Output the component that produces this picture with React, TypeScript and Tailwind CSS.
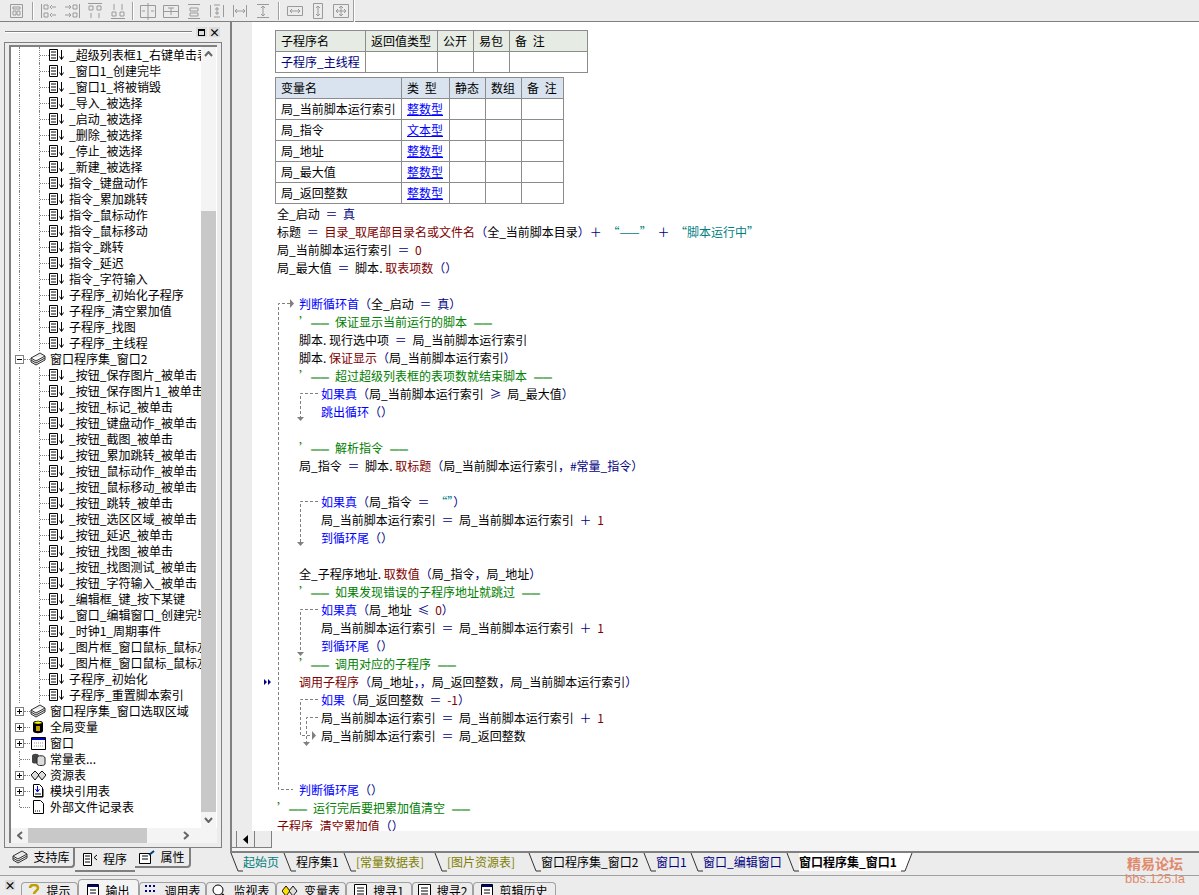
const FONT = "font-['Noto_Sans_CJK_SC','Liberation_Sans',sans-serif]";

type Part = [string, string];

const K = "text-[#0000ff]";
const N = "text-[#000080]";
const M = "text-[#800000]";
const T = "text-[#008080]";
const B = "text-black";
const DOT: Part = [".", "inline-block w-[6px] text-black"];

type Row = { x: number; parts: Part[] };

const idx = "局_当前脚本运行索引";

// comment line: quote, thick rule, text, thick rule
const note = (text: string): Part[] => [
  ["’", "inline-block w-[12px] text-[#008000]"],
  ["══", "mr-[6px] text-[9px] font-bold text-[#008000]"],
  [text, "text-[#008000]"],
  ["══", "ml-[7px] text-[9px] font-bold text-[#008000]"],
];

const codeRows: Row[] = [
  { x: 0, parts: [["全_启动", B], [" ＝ ", N], ["真", N]] },
  { x: 0, parts: [["标题", B], [" ＝ ", N], ["目录_取尾部目录名或文件名", M], ["（", N], ["全_当前脚本目录", B], ["）＋ ", N], ["“——”", T], [" ＋ ", N], ["“脚本运行中”", T]] },
  { x: 0, parts: [[idx, B], [" ＝ ", N], ["0", M]] },
  { x: 0, parts: [["局_最大值", B], [" ＝ ", N], ["脚本", B], DOT, ["取表项数", M], ["（）", N]] },
  { x: 0, parts: [] },
  { x: 22, parts: [["判断循环首", K], ["（", N], ["全_启动", B], [" ＝ ", N], ["真", N], ["）", N]] },
  { x: 22, parts: note("保证显示当前运行的脚本") },
  { x: 22, parts: [["脚本", B], DOT, ["现行选中项", B], [" ＝ ", N], [idx, B]] },
  { x: 22, parts: [["脚本", B], DOT, ["保证显示", M], ["（", N], [idx, B], ["）", N]] },
  { x: 22, parts: note("超过超级列表框的表项数就结束脚本") },
  { x: 44, parts: [["如果真", K], ["（", N], [idx, B], [" ≥ ", N], ["局_最大值", B], ["）", N]] },
  { x: 44, parts: [["跳出循环", K], ["（）", N]] },
  { x: 0, parts: [] },
  { x: 22, parts: note("解析指令") },
  { x: 22, parts: [["局_指令", B], [" ＝ ", N], ["脚本", B], DOT, ["取标题", M], ["（", N], [idx, B], ["，", N], ["#常量_指令", N], ["）", N]] },
  { x: 0, parts: [] },
  { x: 44, parts: [["如果真", K], ["（", N], ["局_指令", B], [" ＝ ", N], ["“”", T], ["）", N]] },
  { x: 44, parts: [[idx, B], [" ＝ ", N], [idx, B], [" ＋ ", N], ["1", M]] },
  { x: 44, parts: [["到循环尾", K], ["（）", N]] },
  { x: 0, parts: [] },
  { x: 22, parts: [["全_子程序地址", B], DOT, ["取数值", M], ["（", N], ["局_指令", B], ["，", N], ["局_地址", B], ["）", N]] },
  { x: 22, parts: note("如果发现错误的子程序地址就跳过") },
  { x: 44, parts: [["如果真", K], ["（", N], ["局_地址", B], [" ≤ ", N], ["0", M], ["）", N]] },
  { x: 44, parts: [[idx, B], [" ＝ ", N], [idx, B], [" ＋ ", N], ["1", M]] },
  { x: 44, parts: [["到循环尾", K], ["（）", N]] },
  { x: 22, parts: note("调用对应的子程序") },
  { x: 22, parts: [["调用子程序", M], ["（", N], ["局_地址", B], ["，，", N], ["局_返回整数", B], ["，", N], [idx, B], ["）", N]] },
  { x: 44, parts: [["如果", K], ["（", N], ["局_返回整数", B], [" ＝ ", N], ["-1", M], ["）", N]] },
  { x: 44, parts: [[idx, B], [" ＝ ", N], [idx, B], [" ＋ ", N], ["1", M]] },
  { x: 44, parts: [[idx, B], [" ＝ ", N], ["局_返回整数", B]] },
  { x: 0, parts: [] },
  { x: 0, parts: [] },
  { x: 22, parts: [["判断循环尾", K], ["（）", N]] },
  { x: 0, parts: note("运行完后要把累加值清空") },
  { x: 0, parts: [["子程序_清空累加值", M], ["（）", N]] },
];

const subs1 = [
  "_超级列表框1_右键单击表", "_窗口1_创建完毕", "_窗口1_将被销毁", "_导入_被选择", "_启动_被选择", "_删除_被选择",
  "_停止_被选择", "_新建_被选择", "指令_键盘动作", "指令_累加跳转", "指令_鼠标动作", "指令_鼠标移动", "指令_跳转",
  "指令_延迟", "指令_字符输入", "子程序_初始化子程序", "子程序_清空累加值", "子程序_找图", "子程序_主线程",
];
const subs2 = [
  "_按钮_保存图片_被单击", "_按钮_保存图片1_被单击", "_按钮_标记_被单击", "_按钮_键盘动作_被单击", "_按钮_截图_被单击",
  "_按钮_累加跳转_被单击", "_按钮_鼠标动作_被单击", "_按钮_鼠标移动_被单击", "_按钮_跳转_被单击", "_按钮_选区区域_被单击",
  "_按钮_延迟_被单击", "_按钮_找图_被单击", "_按钮_找图测试_被单击", "_按钮_字符输入_被单击", "_编辑框_键_按下某键",
  "_窗口_编辑窗口_创建完毕", "_时钟1_周期事件", "_图片框_窗口鼠标_鼠标左键", "_图片框_窗口鼠标_鼠标左键", "子程序_初始化", "子程序_重置脚本索引",
];

function SubIcon() {
  return (
    <svg width="16" height="12" viewBox="0 0 16 12" className="shrink-0">
      <path d="M.5.5h8v11h-8zM2 3h5M2 6h5M2 9h5" fill="#fff" stroke="#000" />
      <path d="M12.500 1v9M10.500 7.500l2 3 2-3" fill="none" stroke="#000" />
    </svg>
  );
}

function StackIcon() {
  return (
    <svg width="16" height="14" viewBox="0 0 16 14" className="shrink-0">
      <path d="M1 6l9-5 5 3-9 5zM1 6v2l5 3 9-5V4M1 8v2l5 3 9-5V6" fill="#e8e8e8" stroke="#333" />
    </svg>
  );
}

function Expander({ open }: { open?: boolean }) {
  return (
    <span className="relative z-10 flex h-[9px] w-[9px] shrink-0 items-center justify-center border border-[#808080] bg-white">
      <span className="block h-px w-[5px] bg-black" />
      {!open && <span className="absolute h-[5px] w-px bg-black" />}
    </span>
  );
}

function Guide({ half }: { half?: boolean }) {
  return <span className={`w-px shrink-0 border-l border-dotted border-[#808080] ${half ? "h-[8px] self-start" : "self-stretch"}`} />;
}

function Dots({ w }: { w: string }) {
  return <span className={`shrink-0 border-t border-dotted border-[#808080] ${w}`} />;
}

function SubRow({ label }: { label: string }) {
  return (
    <div className="flex h-4 items-center pl-[8px]">
      <Guide />
      <span className="ml-[19px] flex self-stretch">
        <Guide />
      </span>
      <Dots w="w-[9px]" />
      <SubIcon />
      <span className="ml-[4px] whitespace-nowrap">{label}</span>
    </div>
  );
}

function GroupRow({ label, open, icon, noBox, last }: { label: string; open?: boolean; icon: React.ReactNode; noBox?: boolean; last?: boolean }) {
  return (
    <div className="flex h-4 items-center pl-[4px]">
      {noBox ? (
        <>
          <span className="ml-[4px] flex self-stretch">
            <Guide half={last} />
          </span>
          <Dots w="w-[10px]" />
        </>
      ) : (
        <>
          <Expander open={open} />
          <Dots w="w-[6px]" />
        </>
      )}
      <span className="flex w-[16px] shrink-0 justify-center">{icon}</span>
      <span className="ml-[4px] whitespace-nowrap">{label}</span>
    </div>
  );
}

function Tree() {
  return (
    <div className="flex flex-col text-[12px] leading-4 text-black">
      {subs1.map((s) => (
        <SubRow key={s} label={s} />
      ))}
      <GroupRow label="窗口程序集_窗口2" open icon={<StackIcon />} />
      {subs2.map((s, i) => (
        <SubRow key={s + i} label={s} />
      ))}
      <GroupRow label="窗口程序集_窗口选取区域" icon={<StackIcon />} />
      <GroupRow
        label="全局变量"
        icon={
          <svg width="12" height="14" viewBox="0 0 12 14">
            <path d="M1 3c0-3 10-3 10 0v8c0 3-10 3-10 0z" fill="#000" />
            <path d="M2 3c2-2 6-2 8 0-2 1-6 1-8 0z" fill="#ffff00" />
            <path d="M4 6h4v5H4z" fill="#c0a000" />
          </svg>
        }
      />
      <GroupRow
        label="窗口"
        icon={
          <svg width="15" height="13" viewBox="0 0 15 13">
            <path d="M.5.5h14v12H.5z" fill="#fff" stroke="#000" />
            <path d="M1 1h13v2H1z" fill="#0000c0" />
            <path d="M3 6h9M3 9h9" stroke="#999" strokeDasharray="1 1" />
          </svg>
        }
      />
      <GroupRow
        label="常量表..."
        noBox
        icon={
          <svg width="15" height="13" viewBox="0 0 15 13">
            <path d="M1 3c0-3 7-3 7 0v6c0 2-7 2-7 0z" fill="#444" />
            <path d="M6 5c0-3 8-3 8 0v6c0 2-8 2-8 0z" fill="#ddd" stroke="#222" />
          </svg>
        }
      />
      <GroupRow
        label="资源表"
        icon={
          <svg width="15" height="11" viewBox="0 0 15 11">
            <path d="M4 1l4 4-4 5-4-5zM11 1l4 4-4 5-4-5z" fill="#ddd" stroke="#111" />
          </svg>
        }
      />
      <GroupRow
        label="模块引用表"
        icon={
          <svg width="14" height="14" viewBox="0 0 14 14">
            <path d="M2.500.5h6l3 3v9h-9z" fill="#fff" stroke="#000" />
            <path d="M12 5v8H4" fill="none" stroke="#000" />
            <path d="M6.500 2v5M4.500 5l2 3 2-3" fill="none" stroke="#0000d0" />
            <path d="M4 10h6" stroke="#000" />
          </svg>
        }
      />
      <GroupRow
        label="外部文件记录表"
        noBox
        last
        icon={
          <svg width="13" height="14" viewBox="0 0 13 14">
            <path d="M1.500.5h7l3 3v10h-10z" fill="#fff" stroke="#000" />
            <path d="M3 11h1M5 11h1M7 11h1" stroke="#000" />
          </svg>
        }
      />
    </div>
  );
}

function ToolIcon({ d }: { d: string }) {
  return (
    <svg width="18" height="18" viewBox="0 0 18 18" className="shrink-0">
      <path d={d} fill="none" stroke="#9a9a9a" />
    </svg>
  );
}

const ic = {
  form: "M2.500 2.500h12v13h-12zM5 5h7v2H5zM5 9h3v4H5zM9 9h3v4H9z",
  a: "M1.500 2v14M4 3h4v4H4zM4 11h4v4H4zM12 5h4M12 13h4M12 3l-2 2 2 2M12 11l-2 2 2 2",
  b: "M16.500 2v14M10 3h4v4h-4zM10 11h4v4h-4zM2 5h5M2 13h5M6 3l2 2-2 2M6 11l2 2-2 2",
  c: "M2 1.500h14M3 4h4v4H3zM11 4h4v4h-4zM5 11v5M13 11v5",
  d: "M2 16.500h14M3 10h4v4H3zM11 10h4v4h-4zM5 2v6M13 2v6",
  e: "M1.500 3.500h15v12h-15zM9 1v17M3 9h3M12 9h3",
  f: "M1.500 3.500h15v12h-15zM1 9.500h16M9 6v7M6 6h6",
  g: "M3 2.500h12M3 16.500h12M5 6h8v3H5zM5 11h8v3H5z",
  h: "M2.500 3v12M15.500 3v12M6 3h6M6 15h6M9 5v8M7 7h4M7 11h4",
  i: "M2.500 3v12M15.500 3v12M4 9h10M4 9l2-2M4 9l2 2M14 9l-2-2M14 9l-2 2",
  j: "M3 2.500h12M3 15.500h12M9 4v10M9 4L7 6M9 4l2 2M9 14l-2-2M9 14l2-2",
  k: "M1.500 4.500h15v9h-15zM4 9h10M4 9l2-2M4 9l2 2M14 9l-2-2M14 9l-2 2",
  l: "M4.500 1.500h9v15h-9zM9 4v10M9 4L7 6M9 4l2 2M9 14l-2-2M9 14l2-2",
  m: "M1.500 2.500h15v13h-15zM9 4v10M4 9h10M9 4L7 6M9 4l2 2M9 14l-2-2M9 14l2-2M4 9l2-2M4 9l2 2M14 9l-2-2M14 9l-2 2",
};

function Sep({ wide }: { wide?: boolean }) {
  return <span className={`h-[18px] w-[2px] shrink-0 border-l border-r border-l-[#a0a0a0] border-r-white ${wide ? "mx-[6px]" : "mx-[5px]"}`} />;
}

function Toolbar() {
  return (
    <div className="flex h-[22px] shrink-0 items-center border-b border-[#808080] bg-[#ececec] pl-[8px]">
      <ToolIcon d={ic.form} />
      <Sep wide />
      <div className="flex gap-[5px]">
        <ToolIcon d={ic.a} />
        <ToolIcon d={ic.b} />
        <ToolIcon d={ic.c} />
        <ToolIcon d={ic.d} />
      </div>
      <Sep />
      <div className="flex gap-[5px]">
        <ToolIcon d={ic.e} />
        <ToolIcon d={ic.f} />
        <ToolIcon d={ic.g} />
        <ToolIcon d={ic.h} />
        <ToolIcon d={ic.i} />
        <ToolIcon d={ic.j} />
      </div>
      <Sep wide />
      <div className="flex gap-[5px]">
        <ToolIcon d={ic.k} />
        <ToolIcon d={ic.l} />
        <ToolIcon d={ic.m} />
      </div>
      <span className="ml-[3px] h-[22px] w-[2px] border-l border-r border-l-[#a0a0a0] border-r-white" />
    </div>
  );
}

function LeftPanel() {
  return (
    <div className="flex w-[222px] shrink-0 flex-col pl-[4px]">
      <div className="flex h-[20px] shrink-0 items-center pl-[1px] pr-[2px]">
        <span className="h-[2px] flex-1 border-t border-b border-t-[#808080] border-b-white" />
        <span className="ml-[4px] flex h-[10px] w-[11px] items-center justify-center bg-[#dcdcdc]">
          <span className="block h-[7px] w-[7px] border border-t-2 border-black" />
        </span>
        <span className="ml-[2px] flex h-[10px] w-[11px] items-center justify-center bg-[#dcdcdc] text-[11px] font-bold leading-none">×</span>
      </div>
      <div className="flex h-[806px] flex-col border border-[#808080] bg-[#ececec] px-[4px] pb-[4px] pt-[2px]">
        <div className="flex h-full flex-col border-2 border-[#808080] border-b-0 border-r-0 bg-white">
          <div className="flex min-h-0 flex-1">
            <div className="w-[190px] overflow-hidden">
              <Tree />
            </div>
            <div className="flex w-[15px] shrink-0 flex-col bg-[#f4f4f4]">
              <span className="flex h-[14px] items-center justify-center">
                <svg width="9" height="6" viewBox="0 0 9 6">
                  <path d="M1 5l3.500-4L8 5" fill="none" stroke="#666" strokeWidth="2" />
                </svg>
              </span>
              <span className="mt-[150px] flex-1 bg-[#c8c8c8]" />
              <span className="flex h-[16px] items-center justify-center">
                <svg width="9" height="6" viewBox="0 0 9 6">
                  <path d="M1 1l3.500 4L8 1" fill="none" stroke="#666" strokeWidth="2" />
                </svg>
              </span>
            </div>
          </div>
          <div className="flex h-[15px] shrink-0 items-center bg-[#f4f4f4]">
            <span className="flex w-[17px] justify-center">
              <svg width="6" height="9" viewBox="0 0 6 9">
                <path d="M5 1L1 4.500 5 8" fill="none" stroke="#666" strokeWidth="2" />
              </svg>
            </span>
            <span className="h-full w-[119px] bg-[#c8c8c8]" />
            <span className="flex flex-1 justify-end pr-[28px]">
              <svg width="6" height="9" viewBox="0 0 6 9">
                <path d="M1 1l4 3.500L1 8" fill="none" stroke="#666" strokeWidth="2" />
              </svg>
            </span>
          </div>
        </div>
      </div>
      <div className="flex h-[24px] items-start pl-[5px] text-[12px] text-black">
        <div className="flex h-[20px] w-[66px] items-center justify-center gap-[5px] rounded-br-sm border-r-2 border-b-2 border-[#808080]">
          <StackIcon />
          支持库
        </div>
        <div className="flex h-[24px] w-[60px] items-center justify-center gap-[5px] border-b-2 border-[#808080] bg-[#ececec]">
          <svg width="15" height="14" viewBox="0 0 15 14" className="shrink-0">
            <path d="M.5 1.500h8v12h-8zM2 4h5M2 7h5M2 10h5" fill="#fff" stroke="#000" />
            <path d="M14 3l-3 2.500 3 2.500" fill="none" stroke="#000" />
          </svg>
          程序
        </div>
        <div className="flex h-[20px] w-[56px] items-center justify-center gap-[5px] rounded-br-sm border-r-2 border-b-2 border-[#808080]">
          <svg width="16" height="14" viewBox="0 0 16 14">
            <path d="M.5 3.500h11v10H.5zM3 6h6M3 9h6" fill="#fff" stroke="#000" />
            <path d="M10 5l5-4" stroke="#004080" strokeWidth="2" />
          </svg>
          属性
        </div>
      </div>
    </div>
  );
}

function Th({ children, bg }: { children: string; bg: string }) {
  return <td className={`border border-[#8c8c8c] px-[5px] text-left font-normal ${bg}`}>{children}</td>;
}

function ProcTables() {
  const vars = [
    [idx, "整数型"],
    ["局_指令", "文本型"],
    ["局_地址", "整数型"],
    ["局_最大值", "整数型"],
    ["局_返回整数", "整数型"],
  ];
  return (
    <div className="pl-[23px] pt-[8px] text-[12px] text-black [word-spacing:3px]">
      <table className="w-[312px] table-fixed border-collapse leading-none">
        <colgroup>
          <col className="w-[90px]" />
          <col className="w-[72px]" />
          <col className="w-[36px]" />
          <col className="w-[36px]" />
          <col className="w-[78px]" />
        </colgroup>
        <tbody>
          <tr className="h-[21px]">
            {["子程序名", "返回值类型", "公开", "易包", "备 注"].map((h) => (
              <Th key={h} bg="bg-[#e6ece4]">
                {h}
              </Th>
            ))}
          </tr>
          <tr className="h-[21px]">
            <td className="border border-[#8c8c8c] px-[5px] whitespace-nowrap text-[#000080]">子程序_主线程</td>
            <td className="border border-[#8c8c8c]" />
            <td className="border border-[#8c8c8c]" />
            <td className="border border-[#8c8c8c]" />
            <td className="border border-[#8c8c8c]" />
          </tr>
        </tbody>
      </table>
      <table className="mt-[4px] w-[288px] table-fixed border-collapse leading-none">
        <colgroup>
          <col className="w-[126px]" />
          <col className="w-[48px]" />
          <col className="w-[36px]" />
          <col className="w-[36px]" />
          <col className="w-[42px]" />
        </colgroup>
        <tbody>
          <tr className="h-[21px]">
            {["变量名", "类 型", "静态", "数组", "备 注"].map((h) => (
              <Th key={h} bg="bg-[#d9e3ef]">
                {h}
              </Th>
            ))}
          </tr>
          {vars.map(([name, type]) => (
            <tr key={name} className="h-[21px]">
              <td className="border border-[#8c8c8c] px-[5px] whitespace-nowrap">{name}</td>
              <td className="border border-[#8c8c8c] px-[5px] text-[#0000ff] underline">{type}</td>
              <td className="border border-[#8c8c8c]" />
              <td className="border border-[#8c8c8c]" />
              <td className="border border-[#8c8c8c]" />
            </tr>
          ))}
        </tbody>
      </table>
    </div>
  );
}

function FlowLines() {
  // coordinates are relative to the editor area (x - 230, y - 23)
  const dash = "3 2";
  const stroke = "#808080";
  return (
    <svg className="pointer-events-none absolute inset-0" width="300" height="808">
      <path d="M60 281.500H48.500v486H63" fill="none" stroke={stroke} strokeDasharray={dash} />
      <path d="M60 277l4 4.500-4 4.500z" fill={stroke} />
      <path d="M88 371.500H70.500v24" fill="none" stroke={stroke} strokeDasharray={dash} />
      <path d="M67 395h7l-3.500 4z" fill={stroke} />
      <path d="M88 479.500H70.500v41" fill="none" stroke={stroke} strokeDasharray={dash} />
      <path d="M67 520h7l-3.500 4z" fill={stroke} />
      <path d="M88 587.500H70.500v43" fill="none" stroke={stroke} strokeDasharray={dash} />
      <path d="M67 630h7l-3.500 4z" fill={stroke} />
      <path d="M88 677.500H70.500v36H82" fill="none" stroke={stroke} strokeDasharray={dash} />
      <path d="M88 695.500H76.500v25" fill="none" stroke={stroke} strokeDasharray={dash} />
      <path d="M82 709l4 4.500-4 4.500z" fill={stroke} />
      <path d="M73 720h7l-3.500 4z" fill={stroke} />
      <path d="M34 657l3 3-3 3zM38 657l3 3-3 3z" fill="#000080" />
    </svg>
  );
}

function Editor() {
  return (
    <div className="flex min-h-0 flex-1 border-l-2 border-[#808080]">
      <div className="w-[20px] shrink-0 bg-[#ececec]" />
      <div className="relative min-w-0 flex-1 overflow-hidden bg-white">
        <ProcTables />
        <div className="pl-[25px] pt-[1px] text-[12px] [word-spacing:3px]">
          {codeRows.map((r, i) => (
            <div key={i} className="h-[18px] whitespace-pre leading-[18px]" style={{ paddingLeft: r.x }}>
              {r.parts.map(([t, c], j) => (
                <span key={j} className={c}>
                  {t}
                </span>
              ))}
            </div>
          ))}
        </div>
      </div>
    </div>
  );
}

const tabs: [string, string, number][] = [
  ["起始页", "text-[#008080]", 40],
  ["程序集1", "text-black", 47],
  ["[常量数据表]", "text-[#808000]", 78],
  ["[图片资源表]", "text-[#808000]", 81],
  ["窗口程序集_窗口2", "text-black", 102],
  ["窗口1", "text-[#000080]", 34],
  ["窗口_编辑窗口", "text-[#000080]", 83],
];

function TabSlash() {
  return (
    <svg width="13" height="19" viewBox="0 0 13 19" className="shrink-0">
      <path d="M1 0l7 18h5" fill="none" stroke="#333" />
    </svg>
  );
}

function TabStrip() {
  return (
    <div className="flex h-[24px] shrink-0 items-start border-t-2 border-[#808080] text-[12px] leading-[18px]">
      {tabs.map(([label, color, w]) => (
        <div key={label} className="flex items-start">
          <TabSlash />
          <span className={`whitespace-nowrap ${color}`} style={{ width: w }}>
            {label}
          </span>
        </div>
      ))}
      <TabSlash />
      <span className="h-[18px] whitespace-nowrap bg-white pr-[4px] font-bold text-black">窗口程序集_窗口1</span>
      <svg width="12" height="19" viewBox="0 0 12 19" className="shrink-0">
        <path d="M0 18h4l7-18H0z" fill="#fff" />
        <path d="M0 18h4l7-18" fill="none" stroke="#333" />
      </svg>
    </div>
  );
}

function BottomScroll() {
  return (
    <div className="flex h-[20px] shrink-0 border-l-2 border-[#808080] bg-[#f4f4f4]">
      <div className="h-[17px] w-[5px] border-r border-b border-[#808080] bg-[#ececec]" />
      <div className="flex h-[17px] w-[18px] items-center justify-center border-r border-b border-[#808080] bg-[#ececec]">
        <svg width="5" height="9" viewBox="0 0 5 9">
          <path d="M5 0v9L0 4.500z" fill="#000" />
        </svg>
      </div>
      <div className="h-[17px] w-[17px] border-r border-b border-[#808080] bg-[#ececec]" />
    </div>
  );
}

const dock: [string, string, string, boolean][] = [
  ["提示", "w-[57px]", "?", false],
  ["输出", "w-[61px]", "o", true],
  ["调用表", "w-[67px]", "c", false],
  ["监视表", "w-[70px]", "w", false],
  ["变量表", "w-[70px]", "v", false],
  ["搜寻1", "w-[66px]", "s", false],
  ["搜寻2", "w-[61px]", "s", false],
  ["剪辑历史", "w-[83px]", "o", false],
];

function DockIcon({ kind }: { kind: string }) {
  if (kind === "?") {
    return (
      <svg width="12" height="14" viewBox="0 0 12 14">
        <path d="M2 4c0-4 8-4 8 0 0 3-4 3-4 6M6 11v2" fill="none" stroke="#c0a000" strokeWidth="2.500" />
      </svg>
    );
  }
  if (kind === "c") {
    return (
      <svg width="14" height="14" viewBox="0 0 14 14">
        <path d="M1 2h12M1 7h12M1 12h12" stroke="#000080" strokeDasharray="2 2" strokeWidth="2" />
      </svg>
    );
  }
  if (kind === "w") {
    return (
      <svg width="15" height="14" viewBox="0 0 15 14">
        <circle cx="6" cy="6" r="5" fill="#fff" stroke="#000" />
        <path d="M10 10l4 4" stroke="#000" strokeWidth="2" />
      </svg>
    );
  }
  if (kind === "v") {
    return (
      <svg width="16" height="12" viewBox="0 0 16 12">
        <path d="M4 1l4 5-4 5-4-5z" fill="#ffe000" stroke="#111" />
        <path d="M11 1l4 5-4 5-4-5z" fill="#ddd" stroke="#111" />
      </svg>
    );
  }
  if (kind === "o") {
    return (
      <svg width="12" height="14" viewBox="0 0 12 14">
        <path d="M.5.5h11v13H.5zM3 6h6M3 9h6" fill="#fff" stroke="#000" />
        <path d="M1 1h10v2H1z" fill="#000080" />
      </svg>
    );
  }
  return (
    <svg width="13" height="14" viewBox="0 0 13 14">
      <path d="M.5.5h12v13H.5zM3 4h7M3 7h7M3 10h7" fill="#fff" stroke="#000" />
    </svg>
  );
}

function Dock() {
  return (
    <div className="flex h-[20px] shrink-0 items-start overflow-hidden border-t border-[#a0a0a0] bg-[#ececec] pt-[6px] text-[12px] text-black">
      <span className="ml-[5px] mr-[6px] -mt-[2px] flex h-[10px] w-[10px] items-center justify-center bg-[#dcdcdc] text-[11px] font-bold leading-none">×</span>
      {dock.map(([label, w, kind, active]) => (
        <div
          key={label}
          className={`flex shrink-0 items-center justify-center gap-[6px] rounded-t-sm border-r border-l border-t border-[#a0a0a0] ${w} ${active ? "-mt-[3px] h-[19px] bg-[#f4f4f4] pt-[3px]" : "h-[16px]"}`}
        >
          <DockIcon kind={kind} />
          <span className="whitespace-nowrap">{label}</span>
        </div>
      ))}
    </div>
  );
}

export default function App() {
  return (
    <div className={`relative flex h-[895px] w-[1199px] flex-col overflow-hidden bg-[#ececec] ${FONT}`}>
      <Toolbar />
      <div className="flex min-h-0 flex-1">
        <LeftPanel />
        <div className="flex min-w-0 flex-1 flex-col pl-[8px]">
          <div className="relative flex min-h-0 flex-1 flex-col">
            <Editor />
            <FlowLines />
          </div>
          <BottomScroll />
          <TabStrip />
        </div>
      </div>
      <Dock />
      <div className="absolute bottom-[9px] right-[14px] flex flex-col items-center text-[#e08a6c]">
        <span className="text-[14px] font-bold leading-[18px]">精易论坛</span>
        <span className="font-['Liberation_Sans',sans-serif] text-[13px] leading-[14px]">bbs.125.la</span>
      </div>
    </div>
  );
}
